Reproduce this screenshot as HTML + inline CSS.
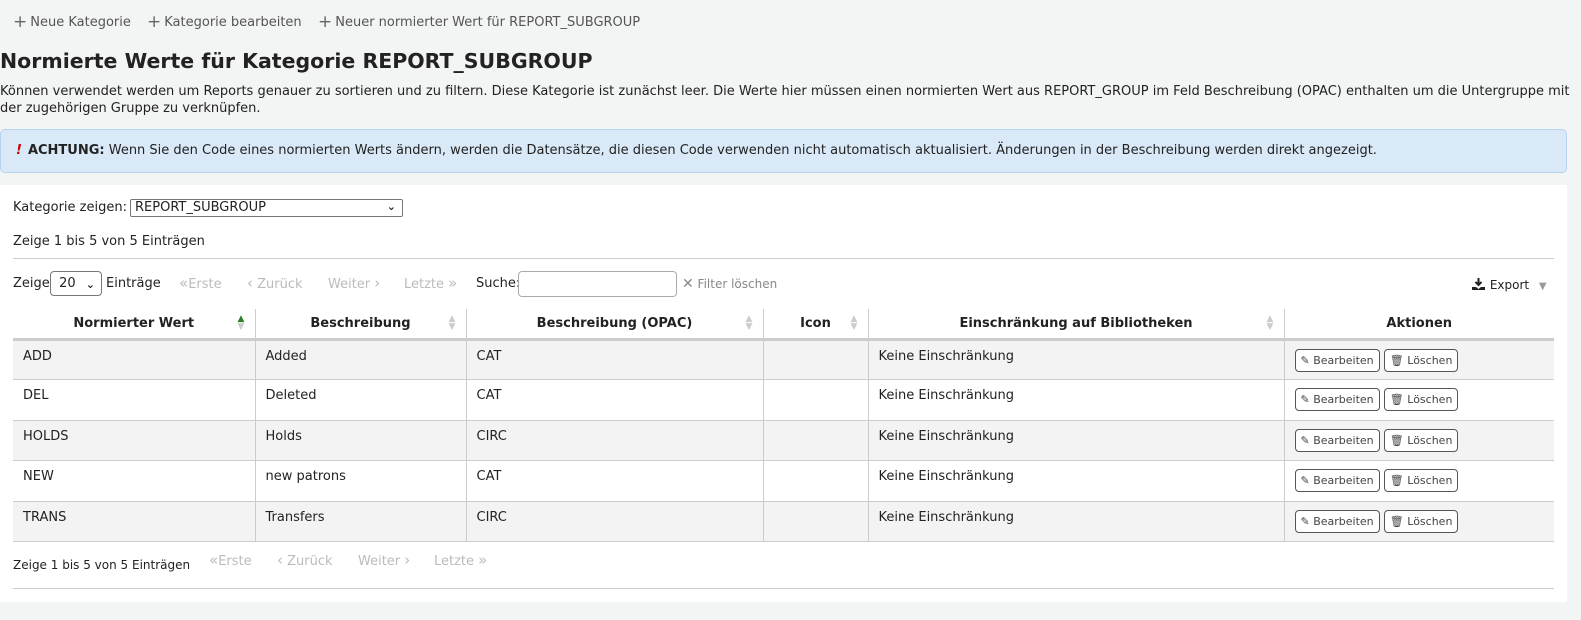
<!DOCTYPE html>
<html><head><meta charset="utf-8">
<style>
*{box-sizing:border-box;margin:0;padding:0}
body{width:1581px;height:620px;background:#f3f4f4;font-family:"DejaVu Sans","Liberation Sans",sans-serif;font-size:13px;color:#222;position:relative;overflow:hidden}
.a{position:absolute;white-space:nowrap}
.tb{color:#555;font-size:13px}
.tb b{font-weight:normal;font-size:17px;color:#666;margin-right:3px;position:relative;top:1px}
h1{position:absolute;left:0;top:49px;font-size:20.5px;font-weight:bold;color:#222}
.alert{position:absolute;left:0;top:129px;width:1567px;height:44px;background:#d9e9f8;border:1px solid #b5d3ef;border-radius:5px;padding:13px 0 0 15px}
.panel{position:absolute;left:0;top:185px;width:1567px;height:417px;background:#fff}
.sel{position:absolute;border:1px solid #777;border-radius:2px;background:#fff;height:18px;font-size:13px;padding:1px 4px;line-height:14px}
.chev{position:absolute;right:6px;top:0;font-size:11px;font-weight:bold;color:#222}
.hr{position:absolute;left:13px;width:1541px;height:1px;background:#ccc}
.dis{color:#bbb}
.dis i{font-style:normal;font-size:15px}
table{position:absolute;left:13px;top:309px;border-collapse:collapse;width:1541px}
th{height:30px;font-weight:bold;font-size:13px;border-left:1px solid #ccc;border-bottom:3px solid #ccc;position:relative;text-align:center}
th:first-child,td:first-child{border-left:none}
th .s{position:absolute;right:9px;top:6px;width:9px;font-size:9px;line-height:8px;color:#ccc}
td{height:40.5px;border-left:1px solid #ccc;border-bottom:1px solid #ccc;vertical-align:top;padding:8px 0 0 10px}
tr.o td{background:#f3f3f3}
.btn{display:inline-block;border:1px solid #555;border-radius:4px;font-size:11px;color:#444;height:23px;line-height:21px;padding:0 5px;background:#fff}
</style></head><body>
<div class="a tb" style="left:13px;top:11px"><b>+</b>Neue Kategorie</div>
<div class="a tb" style="left:147px;top:11px"><b>+</b>Kategorie bearbeiten</div>
<div class="a tb" style="left:318px;top:11px"><b>+</b>Neuer normierter Wert für REPORT_SUBGROUP</div>
<h1>Normierte Werte für Kategorie REPORT_SUBGROUP</h1>
<div class="a" style="left:0;top:83px;white-space:normal;width:1570px;line-height:17px">Können verwendet werden um Reports genauer zu sortieren und zu filtern. Diese Kategorie ist zunächst leer. Die Werte hier müssen einen normierten Wert aus REPORT_GROUP im Feld Beschreibung (OPAC) enthalten um die Untergruppe mit der zugehörigen Gruppe zu verknüpfen.</div>
<div class="alert"><span style="color:#c00;font-style:italic;font-weight:bold;margin-right:6px">!</span><b>ACHTUNG:</b> Wenn Sie den Code eines normierten Werts ändern, werden die Datensätze, die diesen Code verwenden nicht automatisch aktualisiert. Änderungen in der Beschreibung werden direkt angezeigt.</div>
<div class="panel"></div>
<div class="a" style="left:13px;top:200px">Kategorie zeigen:</div>
<div class="sel" style="left:130px;top:199px;width:273px">REPORT_SUBGROUP<span class="chev">⌄</span></div>
<div class="a" style="left:13px;top:234px">Zeige 1 bis 5 von 5 Einträgen</div>
<div class="hr" style="top:258px"></div>
<div class="a" style="left:13px;top:276px">Zeige</div>
<div class="sel" style="left:50px;top:271px;width:52px;height:25px;line-height:21px;border-radius:4px">&nbsp;20<span class="chev" style="top:2px">⌄</span></div>
<div class="a" style="left:106px;top:276px">Einträge</div>
<div class="a dis" style="left:179px;top:274px"><i>«</i>Erste</div>
<div class="a dis" style="left:247px;top:274px"><i>‹</i> Zurück</div>
<div class="a dis" style="left:328px;top:274px">Weiter <i>›</i></div>
<div class="a dis" style="left:404px;top:274px">Letzte <i>»</i></div>
<div class="a" style="left:476px;top:276px">Suche:</div>
<div class="a" style="left:518px;top:271px;width:159px;height:26px;border:1px solid #aaa;border-radius:4px;background:#fff"></div>
<div class="a" style="left:682px;top:276px;color:#888;font-size:12px"><span style="font-size:14px">✕</span> Filter löschen</div>
<div class="a" style="left:1471px;top:277px;font-size:12px">
<svg width="15" height="14" viewBox="0 0 15 14" style="vertical-align:-2px"><path d="M7.5 1v7M4.5 5l3 3 3-3" stroke="#222" stroke-width="2" fill="none"/><path d="M1 10h4l2.5 2 2.5-2h4v3H1z" fill="#222"/></svg> Export <span style="color:#999;font-size:10px;margin-left:6px">▼</span></div>
<table>
<tr><th style="width:242px">Normierter Wert<span class="s"><span style="color:#2a7d2a">▲</span><br>▼</span></th><th style="width:211px">Beschreibung<span class="s">▲<br>▼</span></th><th style="width:297px">Beschreibung (OPAC)<span class="s">▲<br>▼</span></th><th style="width:105px">Icon<span class="s">▲<br>▼</span></th><th style="width:416px">Einschränkung auf Bibliotheken<span class="s">▲<br>▼</span></th><th>Aktionen</th></tr>
<tr class="o"><td>ADD</td><td>Added</td><td>CAT</td><td></td><td>Keine Einschränkung</td><td><span class="btn">✎ Bearbeiten</span> <span class="btn">🗑 Löschen</span></td></tr>
<tr><td>DEL</td><td>Deleted</td><td>CAT</td><td></td><td>Keine Einschränkung</td><td><span class="btn">✎ Bearbeiten</span> <span class="btn">🗑 Löschen</span></td></tr>
<tr class="o"><td>HOLDS</td><td>Holds</td><td>CIRC</td><td></td><td>Keine Einschränkung</td><td><span class="btn">✎ Bearbeiten</span> <span class="btn">🗑 Löschen</span></td></tr>
<tr><td>NEW</td><td>new patrons</td><td>CAT</td><td></td><td>Keine Einschränkung</td><td><span class="btn">✎ Bearbeiten</span> <span class="btn">🗑 Löschen</span></td></tr>
<tr class="o"><td>TRANS</td><td>Transfers</td><td>CIRC</td><td></td><td>Keine Einschränkung</td><td><span class="btn">✎ Bearbeiten</span> <span class="btn">🗑 Löschen</span></td></tr>
</table>
<div class="a" style="left:13px;top:558px;font-size:12px">Zeige 1 bis 5 von 5 Einträgen</div>
<div class="a dis" style="left:209px;top:551px"><i>«</i>Erste</div>
<div class="a dis" style="left:277px;top:551px"><i>‹</i> Zurück</div>
<div class="a dis" style="left:358px;top:551px">Weiter <i>›</i></div>
<div class="a dis" style="left:434px;top:551px">Letzte <i>»</i></div>
<div class="hr" style="top:588px"></div>
</body></html>
